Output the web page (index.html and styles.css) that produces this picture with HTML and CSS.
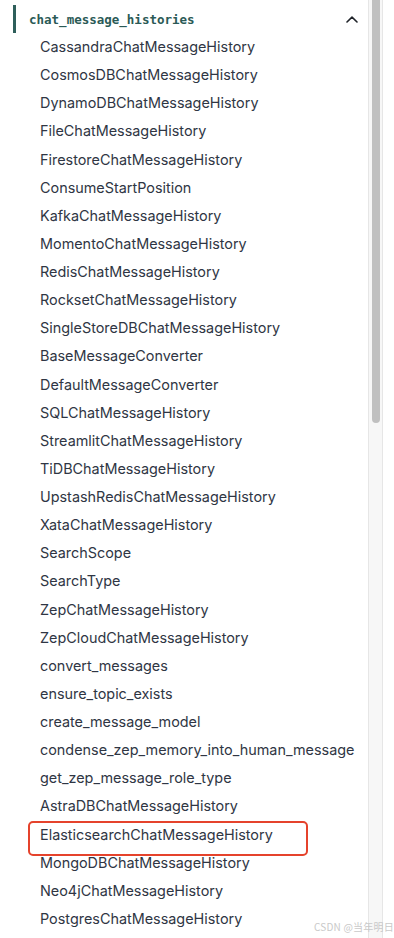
FILE: index.html
```html
<!DOCTYPE html>
<html lang="en">
<head>
  <meta charset="UTF-8">
  <meta name="viewport" content="width=device-width, initial-scale=1.0">
  <title>chat_message_histories</title>
  <link rel="stylesheet" href="styles.css">
</head>
<body>

<div class="frame">
  <nav class="sidebar">
    <div class="group-title">
      <span>chat_message_histories</span>
      <svg class="chevron" width="12" height="7" viewBox="0 0 12 7">
        <path d="M1 6 L6 1.2 L11 6" fill="none" stroke="#1f2329" stroke-width="1.6" stroke-linecap="round" stroke-linejoin="round"/>
      </svg>
    </div>
    <ul class="items">
      <li>CassandraChatMessageHistory</li>
      <li>CosmosDBChatMessageHistory</li>
      <li>DynamoDBChatMessageHistory</li>
      <li>FileChatMessageHistory</li>
      <li>FirestoreChatMessageHistory</li>
      <li>ConsumeStartPosition</li>
      <li>KafkaChatMessageHistory</li>
      <li>MomentoChatMessageHistory</li>
      <li>RedisChatMessageHistory</li>
      <li>RocksetChatMessageHistory</li>
      <li>SingleStoreDBChatMessageHistory</li>
      <li>BaseMessageConverter</li>
      <li>DefaultMessageConverter</li>
      <li>SQLChatMessageHistory</li>
      <li>StreamlitChatMessageHistory</li>
      <li>TiDBChatMessageHistory</li>
      <li>UpstashRedisChatMessageHistory</li>
      <li>XataChatMessageHistory</li>
      <li>SearchScope</li>
      <li>SearchType</li>
      <li>ZepChatMessageHistory</li>
      <li>ZepCloudChatMessageHistory</li>
      <li>convert_messages</li>
      <li>ensure_topic_exists</li>
      <li>create_message_model</li>
      <li>condense_zep_memory_into_human_message</li>
      <li>get_zep_message_role_type</li>
      <li>AstraDBChatMessageHistory</li>
      <li class="marked">ElasticsearchChatMessageHistory</li>
      <li>MongoDBChatMessageHistory</li>
      <li>Neo4jChatMessageHistory</li>
      <li>PostgresChatMessageHistory</li>
    </ul>
  </nav>
  <div class="scrollbar">
    <div class="thumb"></div>
  </div>
  <div class="watermark">CSDN @当年明日</div>
</div>

</body>
</html>
```

FILE: styles.css
```css
body { margin: 0; background: #fff; font-family: Inter, "Noto Sans", sans-serif; }
.frame { position: relative; display: flex; height: 938px; overflow: hidden; }
.sidebar { width: 367px; padding-top: 5px; }
.group-title {
  display: flex; align-items: center; justify-content: space-between;
  height: 28px; margin-left: 13px; padding: 0 9px 0 13px;
  border-left: 3px solid #2e5f5b;
  font-family: "DejaVu Sans Mono", "Liberation Mono", monospace;
  font-size: 12.5px; font-weight: bold; color: #2b5a56;
}
.chevron { display: block; }
.items { list-style: none; margin: 0; padding: 0; }
.items li {
  padding-left: 40px; height: 28.13px; line-height: 28.13px;
  font-size: 14.4px; color: #2f3644; white-space: nowrap;
}
.items li.marked { position: relative; }
.items li.marked::after {
  content: ""; position: absolute; left: 28px; top: 0; width: 276px; height: 31px;
  border: 2px solid #e5432c; border-radius: 5px;
}
.scrollbar {
  width: 13px; margin-left: 1px; background: #f7f7f7;
  border-left: 1px solid #e6e6e6; border-right: 1px solid #e6e6e6;
}
.thumb { width: 8px; height: 423px; margin: 0 auto; background: #c0c0c0; border-radius: 0 0 4px 4px; }
.watermark {
  position: absolute; left: 314px; top: 919px;
  font-size: 10px; color: #c9c9c9; letter-spacing: 0.2px;
  font-family: "Noto Sans CJK SC", "Noto Sans", sans-serif;
}
```
